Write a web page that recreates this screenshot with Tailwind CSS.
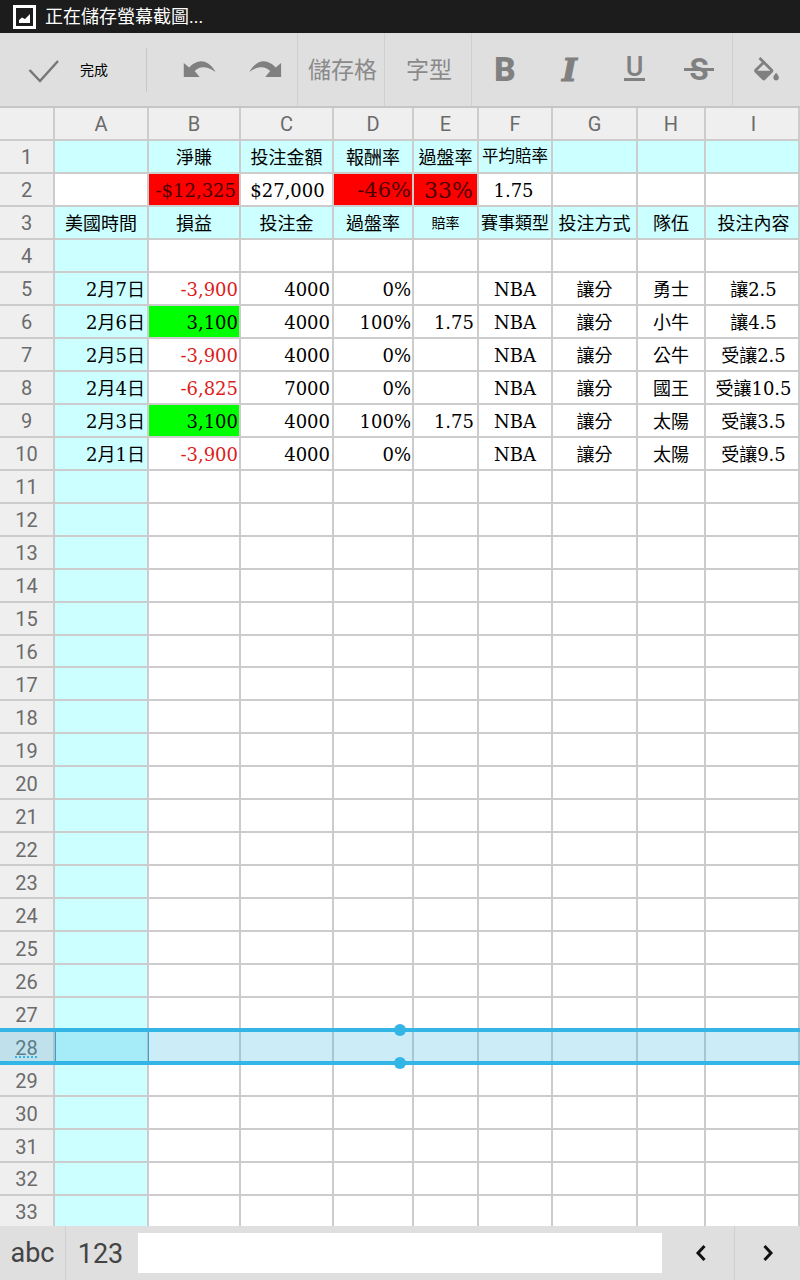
<!DOCTYPE html>
<html lang="zh-Hant">
<head>
  <meta charset="UTF-8" />
  <title>試算表</title>
  <script src="https://cdn.jsdelivr.net/npm/@tailwindcss/browser@4"></script>
</head>
<body class="bg-white">
  <div class="relative w-[800px] h-[1280px] overflow-hidden flex flex-col font-['Roboto','Noto_Sans_CJK_TC',sans-serif]">

    <!-- status bar -->
    <div class="h-[33px] shrink-0 bg-[#1c1c1c] flex items-center pl-[13px] text-white text-[18px]">
      <svg width="23" height="24" viewBox="0 0 23 24" class="mr-[9px]">
        <rect x="1.5" y="1.5" width="20" height="21" fill="none" stroke="#fff" stroke-width="3"/>
        <path d="M6 18 V15 L9 12.5 L12 14 L17 9 V18 Z" fill="#fff"/>
      </svg>
      <span>正在儲存螢幕截圖...</span>
    </div>

    <!-- toolbar -->
    <div class="h-[75px] shrink-0 bg-[#dfdfdf] border-b-2 border-[#c6c6c6] flex text-[#8a8a8a]">
      <div class="w-[147px] flex items-center">
        <svg width="147" height="73" viewBox="0 33 147 73" class="absolute left-0">
          <path d="M29.5 70 L40 81 L58 61" fill="none" stroke="#777" stroke-width="2.5"/>
        </svg>
        <span class="ml-[80px] mt-[2px] text-[14px] text-black">完成</span>
        <div class="ml-auto h-[44px] w-px bg-[#c8c8c8]"></div>
      </div>
      <div class="w-[151px] flex items-center border-r border-[#d0d0d0]">
        <svg width="151" height="73" viewBox="147 33 151 73">
          <path d="M184 77 V63 L189.5 67.5 C197 59 208 58 216 72 C208 66 200 65.5 195 71 L200 77 Z" fill="#808080"/>
          <path d="M282 77 V63 L276.5 67.5 C269 59 258 58 250 72 C258 66 266 65.5 271 71 L266 77 Z" fill="#808080"/>
        </svg>
      </div>
      <div class="w-[87px] flex items-center justify-center pl-[3px] pt-[4px] border-r border-[#d0d0d0] text-[23px]">儲存格</div>
      <div class="w-[87px] flex items-center justify-center pl-[2px] pt-[4px] border-r border-[#d0d0d0] text-[23px]">字型</div>
      <div class="w-[261px] flex items-center border-r border-[#d0d0d0] text-[#808080]">
        <span class="w-[65px] text-center text-[33px] leading-none font-black pl-[1px]">B</span>
        <span class="w-[65px] text-center text-[32px] leading-none font-bold italic [-webkit-text-stroke:1px_#808080] font-['DejaVu_Serif',serif]">I</span>
        <span class="w-[65px] flex justify-center mb-[2px]">
          <span class="w-[21px] h-[24px] text-[27px] leading-[20px] text-center font-medium border-b-[3px] border-[#808080]">U</span>
        </span>
        <span class="relative w-[65px] text-center text-[31px] leading-none font-bold pr-[1px]">S
          <span class="absolute left-[17px] top-[14px] w-[30px] h-[3px] bg-[#808080]"></span>
        </span>
      </div>
      <div class="flex-1 flex items-center justify-center">
        <svg width="33" height="33" viewBox="0 0 24 24" class="mt-[7px]">
          <path fill="#808080" d="M16.56 8.94L7.62 0 6.21 1.41l2.38 2.38-5.15 5.15c-.59.59-.59 1.54 0 2.12l5.5 5.5c.29.29.68.44 1.06.44s.77-.15 1.06-.44l5.5-5.5c.59-.58.59-1.53 0-2.12zM5.21 10L10 5.21 14.79 10H5.21zM19 11.5s-2 2.17-2 3.5c0 1.1.9 2 2 2s2-.9 2-2c0-1.33-2-3.5-2-3.5z"/>
        </svg>
      </div>
    </div>

    <!-- sheet -->
    <div id="sheet" class="flex-1 min-h-0 overflow-hidden grid grid-cols-[55px_94px_92px_93px_80px_65px_74px_85px_68px_94px] auto-rows-[32.97px] content-start"></div>

    <!-- selected row -->
    <div class="absolute left-0 top-[1028px] w-full h-[37px] bg-[#33b5e5]/25 border-y-4 border-[#33b5e5]"></div>
    <div class="absolute left-[55px] top-[1032px] w-[94px] h-[29px] border-x border-[#3c9fc4]"></div>
    <div class="absolute left-[394px] top-[1024px] size-3 rounded-full bg-[#33b5e5]"></div>
    <div class="absolute left-[394px] top-[1057px] size-3 rounded-full bg-[#33b5e5]"></div>

    <!-- bottom bar -->
    <div class="relative h-[54px] shrink-0 bg-[#dfdfdf] flex items-center text-[#444]">
      <div class="w-[66px] h-full flex items-center justify-center border-r border-[#cfcfcf] text-[27px]">abc</div>
      <div class="w-[72px] h-full flex items-center justify-center pr-[3px] pt-[2px] text-[27px]">123</div>
      <div class="w-[524px] h-[40px] bg-white"></div>
      <div class="w-[73px] h-full flex items-center justify-center pl-[6px] border-r border-[#cfcfcf]">
        <svg width="14" height="18" viewBox="0 0 14 18"><path d="M10.5 2 L4 9 L10.5 16" fill="none" stroke="#111" stroke-width="3"/></svg>
      </div>
      <div class="flex-1 h-full flex items-center justify-center">
        <svg width="14" height="18" viewBox="0 0 14 18"><path d="M3.5 2 L10 9 L3.5 16" fill="none" stroke="#111" stroke-width="3"/></svg>
      </div>
    </div>
  </div>

  <script>
    const base = "flex items-center overflow-hidden whitespace-nowrap pt-[2px] border-r-2 border-b-2 border-[#cccccc] font-['DejaVu_Serif','Noto_Sans_CJK_TC',serif] ";
    const hdr = "flex items-center justify-center pt-[2px] border-r-2 border-b-2 border-[#cccccc] bg-[#efefef] text-[20px] text-[#6b6b6b] ";
    const cyan = "bg-[#ccffff] ";
    const center = "justify-center ";
    const t18 = "text-[18px] text-black ";
    const redFill = "bg-[#ff0000] text-[#4d0000] ";

    const columns = ['', 'A', 'B', 'C', 'D', 'E', 'F', 'G', 'H', 'I'];
    const row1 = ['', '淨賺', '投注金額', '報酬率', '過盤率', '平均賠率', '', '', ''];
    const row3 = ['美國時間', '損益', '投注金', '過盤率', '賠率', '賽事類型', '投注方式', '隊伍', '投注內容'];
    const games = [
      ['2月7日', '-3,900', '4000', '0%', '', '勇士', '讓2.5'],
      ['2月6日', '3,100', '4000', '100%', '1.75', '小牛', '讓4.5'],
      ['2月5日', '-3,900', '4000', '0%', '', '公牛', '受讓2.5'],
      ['2月4日', '-6,825', '7000', '0%', '', '國王', '受讓10.5'],
      ['2月3日', '3,100', '4000', '100%', '1.75', '太陽', '受讓3.5'],
      ['2月1日', '-3,900', '4000', '0%', '', '太陽', '受讓9.5']
    ];

    let html = '';
    const cell = (cls, text = '') => { html += `<div class="${cls}">${text}</div>`; };

    columns.forEach((c, i) => cell(hdr + (i === 9 ? "pl-[3px] " : ""), c));

    for (let r = 1; r <= 33; r++) {
      if (r === 28) {
        cell(hdr, '<span class="underline decoration-dotted decoration-2 decoration-[#33b5e5] underline-offset-2">28</span>');
      } else {
        cell(hdr, r);
      }
      if (r === 1) {
        row1.forEach((t, i) => {
          cell(base + cyan + center + (i === 5 ? "text-[16.5px] text-black " : t18), t);
        });
      } else if (r === 2) {
        cell(base);
        cell(base + redFill + "justify-end pr-[3px] text-[18px] ", '-$12,325');
        cell(base + center + "pl-[2px] " + t18, '$27,000');
        cell(base + redFill + "justify-end pr-[1px] text-[21px] ", '-46%');
        cell(base + redFill + center + "pl-[6px] text-[22px] ", '33%');
        cell(base + center + "pr-[3px] " + t18, '1.75');
        cell(base); cell(base); cell(base);
      } else if (r === 3) {
        row3.forEach((t, i) => {
          let size = t18;
          if (i === 4) size = "text-[14px] text-black ";
          if (i === 5) size = "text-[17px] text-black ";
          cell(base + cyan + center + size + (i === 8 ? "pl-[3px] " : ""), t);
        });
      } else if (r >= 5 && r <= 10) {
        const g = games[r - 5];
        const win = !g[1].startsWith('-');
        cell(base + cyan + "justify-end pr-[2px] " + t18, g[0]);
        cell(base + "justify-end pr-[1px] " + (win ? "bg-[#00ff00] text-[18px] text-black " : "text-[18px] text-[#dd1c1c] "), g[1]);
        cell(base + "justify-end pr-[2px] " + t18, g[2]);
        cell(base + "justify-end pr-[1px] " + t18, g[3]);
        cell(base + "justify-end pr-[3px] " + t18, g[4]);
        cell(base + center + t18, 'NBA');
        cell(base + center + t18, '讓分');
        cell(base + center + t18, g[5]);
        cell(base + center + "pl-[3px] " + t18, g[6]);
      } else {
        cell(base + cyan);
        for (let c = 0; c < 8; c++) cell(base);
      }
    }
    document.getElementById('sheet').innerHTML = html;
  </script>
</body>
</html>
